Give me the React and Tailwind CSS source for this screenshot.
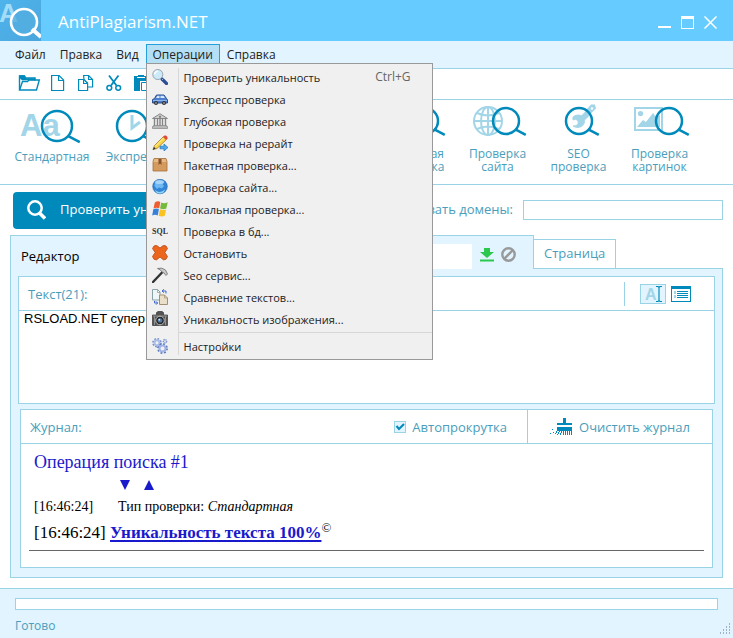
import { useState } from 'react'

/* ---------- small line icons ---------- */

function Logo() {
  return (
    <svg width="41" height="41" viewBox="0 0 41 41" aria-hidden="true">
      <defs>
        <linearGradient id="logoBg" x1="0" y1="0" x2="1" y2="1">
          <stop offset="0" stopColor="#4fb4ec" />
          <stop offset="1" stopColor="#4aa6dd" />
        </linearGradient>
      </defs>
      <rect width="41" height="41" fill="url(#logoBg)" />
      <text x="-1" y="22" fontSize="26" fontWeight="700" fontFamily="Liberation Sans, sans-serif" fill="#a3dcf8">A</text>
      <circle cx="24" cy="22" r="13" fill="#54aee0" fillOpacity="0.75" stroke="#fff" strokeWidth="2.6" />
      <path d="M32 29l9 8" stroke="#fff" strokeWidth="4" />
    </svg>
  )
}

function Folder() {
  return (
    <svg width="20" height="18" viewBox="0 0 20 18" className="overflow-visible" fill="none" stroke="#008abb">
      <path d="M.5 16V2h5l1 2h9.500v2.500" strokeWidth="1.400" />
      <path d="M.5 4V1.500h5l1.500 3H16V6H3z" fill="#008abb" strokeWidth=".5" />
      <path d="M.6 16L3.500 7.500h5l1.500-1.500h10.300l-2.800 10z" strokeWidth="1.400" />
    </svg>
  )
}

function Page() {
  return (
    <svg width="15" height="18" viewBox="0 0 15 18" fill="none" stroke="#008abb" strokeWidth="1.200">
      <path d="M.6 1.500h7.500l4.500 4.500v10.500H.6z" />
      <path d="M7.600 1.500v5h5" />
    </svg>
  )
}

function Copy() {
  return (
    <svg width="16" height="18" viewBox="0 0 16 18" fill="#fff" stroke="#008abb" strokeWidth="1.200">
      <path d="M.6 5.500h5.500l3.500 3.500v7.500H.6z" />
      <path d="M5.600 1.500h5l4 4v7.500h-5V9L6 5.500z" />
      <path d="M10.600 1.500v4h4M5.600 5.500V9.500h4" fill="none" />
    </svg>
  )
}

function Cut() {
  return (
    <svg width="16" height="18" viewBox="0 0 16 18" fill="none" stroke="#008abb">
      <path d="M3 1.500l7.500 10M12.500 1.500L5 11.500" strokeWidth="1.800" />
      <circle cx="3.300" cy="13.800" r="2.400" strokeWidth="1.500" />
      <circle cx="12.200" cy="13.800" r="2.400" strokeWidth="1.500" />
    </svg>
  )
}

function Paste() {
  return (
    <svg width="16" height="18" viewBox="0 0 16 18">
      <path d="M0 2h4V1h6v1h4v5H6v10H0z" fill="#008abb" />
      <path d="M3 3.500h8" stroke="#fff" />
      <path d="M7.500 8.500h7v8h-7z" fill="#fff" stroke="#008abb" />
    </svg>
  )
}

function Lens({ x = 31, y = 23, r = 15 }) {
  const edge = r * 0.72
  return (
    <g fill="none" stroke="#008abb">
      <circle cx={x} cy={y} r={r} strokeWidth="2.500" />
      <path d={`M${x + edge} ${y + edge - 1}l${r * 0.8} ${r * 0.42}`} strokeWidth="2.600" />
    </g>
  )
}

function StandardArt() {
  return (
    <svg width="66" height="46" viewBox="0 0 66 46">
      <text x="1" y="35" fontSize="31" fontWeight="700" fontFamily="Liberation Sans, sans-serif" fill="#a1d5e7">Aa</text>
      <Lens x={38} y={25} />
    </svg>
  )
}

function ExpressArt() {
  return (
    <svg width="66" height="46" viewBox="0 0 66 46">
      <path d="M33 14v13l8-6" fill="none" stroke="#a1d5e7" strokeWidth="3" />
      <Lens x={33} y={25} />
    </svg>
  )
}

function BatchArt() {
  return (
    <svg width="66" height="46" viewBox="0 0 66 46">
      <path d="M8 10h26v24H8z" fill="none" stroke="#a1d5e7" strokeWidth="2" />
      <Lens x={41} y={20} r={13} />
    </svg>
  )
}

function SiteArt() {
  return (
    <svg width="66" height="46" viewBox="0 0 66 46">
      <g fill="none" stroke="#a1d5e7" strokeWidth="2">
        <circle cx="23" cy="20" r="14" />
        <ellipse cx="23" cy="20" rx="7" ry="14" />
        <path d="M23 6v28M9 20h28M12 12q11 5 22 0M12 28q11-5 22 0" />
      </g>
      <Lens x={41} y={20} r={13} />
    </svg>
  )
}

function SeoArt() {
  return (
    <svg width="66" height="46" viewBox="0 0 66 46">
      <path d="M37 17l5-5" stroke="#a1d5e7" strokeWidth="6" />
      <path d="M40 9l5-5.500 4 0 1 4-6 6z" fill="#a1d5e7" />
      <circle cx="46" cy="7.500" r="1.200" fill="#fff" />
      <path d="M27 16c4-3 8-2 10 0 3 4 1 9-3 10-3 1-5 0-7-1 4 0 6-2 5-5-1-2-4-2-5-1 0-1 0-2 0-3z" fill="#a1d5e7" stroke="#a1d5e7" />
      <Lens x={33} y={20} r={13} />
    </svg>
  )
}

function ImageArt() {
  return (
    <svg width="66" height="46" viewBox="0 0 66 46">
      <path d="M8 7h27v22H8z" fill="none" stroke="#a1d5e7" strokeWidth="2" />
      <circle cx="13.500" cy="12.500" r="2.600" fill="#a1d5e7" />
      <path d="M10 26l6-7 3 2 7-9 3 4 4-2v12z" fill="#a1d5e7" />
      <Lens x={42} y={20} r={13} />
    </svg>
  )
}

function Broom() {
  return (
    <svg width="22" height="18" viewBox="0 0 22 18" fill="#008abb" shapeRendering="crispEdges">
      <path d="M13 0h3v5h6v2H7V5h6zM7 9h15v4H7z" />
      <path d="M21 13h1v4h-1zM19 13h1v4h-1zM17 13h1v4h-1zM15 13h1v4h-1zM13 13h1v4h-1zM11 13h1v2h-1zM10 15h1v2h-1zM9 12h1v2H9zM8 14h1v2H8zM7 16h1v1H7zM6 13h1v2H6zM5 15h1v1H5zM3 14h1v1H3zM2 11h1v1H2zM0 15h1v1H0z" />
    </svg>
  )
}

/* ---------- coloured menu icons, 16x16 ---------- */

const menuArt = {
  search: (
    <>
      <path d="M10 10l4.500 4.500" stroke="#2c4f93" strokeWidth="3.200" strokeLinecap="round" />
      <path d="M10 11l1.500-1.500" stroke="#9db8e2" />
      <circle cx="5.800" cy="5.500" r="5" fill="#cdeaf9" stroke="#96a3ad" />
      <path d="M2.500 5.500a3.300 3.300 0 013.300-3.300" stroke="#fff" strokeWidth="1.500" fill="none" />
    </>
  ),
  car: (
    <>
      <path d="M.5 8.500l2-1 2-3.500h7.500l2.500 3.500 1 1.500v3H.5z" fill="#4d7fce" stroke="#284f91" />
      <path d="M4 7l1.300-2.200h2.200V7zM8.500 4.800h3L13 7H8.500z" fill="#d6e7fb" />
      <path d="M1 9.500h14" stroke="#8db4ec" />
      <circle cx="4" cy="12" r="2" fill="#333" /><circle cx="4" cy="12" r=".8" fill="#ccc" />
      <circle cx="12" cy="12" r="2" fill="#333" /><circle cx="12" cy="12" r=".8" fill="#ccc" />
    </>
  ),
  bank: (
    <>
      <path d="M.5 5.500L8 .8l7.500 4.700z" fill="#d2d2d2" stroke="#858585" />
      <circle cx="8" cy="3.800" r="1.100" fill="#777" />
      <path d="M2.500 6v7M5.500 6v7M8 6v7M10.500 6v7M13.500 6v7" stroke="#858585" strokeWidth="1.400" />
      <path d="M1.500 12.500h13v1h1v2H.5v-2h1z" fill="#b9b9b9" stroke="#858585" strokeWidth=".7" />
    </>
  ),
  pencil: (
    <>
      <path d="M1 14.500l1.500-4L11.500 1.500l3 3-9.500 9z" fill="#f7d648" stroke="#a57c28" strokeWidth=".8" />
      <path d="M11 2l1.500-1.500h1.500l1.500 1.500v1.500L14 5z" fill="#e04a3a" />
      <path d="M3 11.500l8.500-8.500" stroke="#fff1a0" />
      <path d="M.7 15l1.300-3 1.800 1.600z" fill="#333" />
      <path d="M8 11.200h4V9l4 3.500-4 3.500v-2.200H8z" fill="#4caae8" stroke="#2673b8" strokeWidth=".7" />
    </>
  ),
  box: (
    <>
      <path d="M1 4.500l1-3h12l1 3v9.500H1z" fill="#d59a5e" stroke="#a66e3c" strokeWidth=".8" />
      <path d="M1.500 5h13L13.600 2H2.400z" fill="#e6b982" />
      <path d="M6.500 2h3v6L8 6.500 6.500 8z" fill="#83522c" />
    </>
  ),
  globe: (
    <>
      <circle cx="8" cy="7.500" r="7.300" fill="#3284d6" stroke="#2669ad" strokeWidth=".6" />
      <path d="M3 3.500q4-4 9.500-.5l-2 2 1.500 2-2 2.500-3-1-2 1.500-2.500-3z" fill="#6fb9f2" />
      <path d="M3 11q5 4 10-.5-1 4-5 4t-5-3.500z" fill="#8ed8fc" />
      <ellipse cx="7.500" cy="3" rx="4.500" ry="2" fill="#cbe8fd" fillOpacity=".6" />
    </>
  ),
  flag: (
    <>
      <path d="M2.800 1.500q3-2 5.500-.5L7.200 7.200Q4.500 6 1.500 7.500z" fill="#ee5d32" />
      <path d="M9.200 1.500q3 1.500 6.500-.3l-1.400 6.200q-3 1.600-6.200 0z" fill="#76b93a" />
      <path d="M1.300 8.300q3-1.500 5.600-.3L5.700 14.500q-2.700-1.500-5.500 0z" fill="#3580d8" />
      <path d="M7.900 8.300q3 1.500 6.200.1l-1.300 6.400q-3 1.500-6.100-.1z" fill="#f9c324" />
    </>
  ),
  sql: (
    <text x="0" y="11" fontSize="8" fontWeight="700" fontFamily="Liberation Serif, serif" fill="#333">SQL</text>
  ),
  stop: (
    <path d="M2 1l2.500-.7L8 3l3.500-2.700L14 1l1.500 2.500-2.700 4 2.700 4-1.500 2.700-2.500.7L8 12l-3.500 2.900L2 14.200.5 11.500l2.700-4-2.700-4z" fill="#ec651d" stroke="#b94712" strokeWidth=".8" />
  ),
  hammer: (
    <>
      <path d="M1 15L10.500 5" stroke="#333" strokeWidth="2.400" strokeLinecap="round" />
      <path d="M5.500 1.500q4.500-1.500 8 1.500l2 4-1.500 1.500L12 6l-2-1-1.500-2z" fill="#c9c9c9" stroke="#6d6d6d" strokeWidth=".8" />
    </>
  ),
  compare: (
    <>
      <path d="M.5.500h5l2.500 2.500v8h-7.500z" fill="#eef6f7" stroke="#8aa1a6" />
      <path d="M7.500 6h5l3 3v6.500h-8z" fill="#eadfc8" stroke="#a29170" />
      <path d="M12.500 6v3h3M5.500.5v3H8" fill="none" stroke="#a29170" strokeWidth=".7" />
      <path d="M10 2h4v2.500M12 .3L10 2l2 1.700M5.500 14h-3V12M4 12.300L5.700 14 4 15.700" fill="none" stroke="#4169cf" />
    </>
  ),
  camera: (
    <>
      <path d="M.5 4h4V1.500L6 .5h4l1.500 1V4h4v10.500H.5z" fill="#535353" stroke="#333" strokeWidth=".7" />
      <path d="M1 5h14M2.500 5v9M13.500 5v9" stroke="#909090" />
      <circle cx="8" cy="9.500" r="4.300" fill="#292929" stroke="#bababa" />
      <circle cx="8" cy="9.500" r="2.300" fill="#4f769f" />
      <circle cx="7.300" cy="8.700" r=".9" fill="#d6e8fb" />
    </>
  ),
  gears: (
    <g fill="none">
      <circle cx="5" cy="4.800" r="4" stroke="#6d87c8" strokeWidth="1.600" strokeDasharray="1.700 1.440" />
      <circle cx="5" cy="4.800" r="2.500" stroke="#aabde9" strokeWidth="2" />
      <circle cx="10.500" cy="10.500" r="4.500" stroke="#5875bf" strokeWidth="1.800" strokeDasharray="1.800 1.740" />
      <circle cx="10.500" cy="10.500" r="3" stroke="#9fb4e5" strokeWidth="2" />
      <circle cx="13" cy="3.200" r="1.600" stroke="#7c94d0" strokeWidth="1.500" strokeDasharray="1.200 .6" />
    </g>
  ),
}

const menuItems = [
  { icon: 'search', label: 'Проверить уникальность', keys: 'Ctrl+G' },
  { icon: 'car', label: 'Экспресс проверка' },
  { icon: 'bank', label: 'Глубокая проверка' },
  { icon: 'pencil', label: 'Проверка на рерайт' },
  { icon: 'box', label: 'Пакетная проверка...' },
  { icon: 'globe', label: 'Проверка сайта...' },
  { icon: 'flag', label: 'Локальная проверка...' },
  { icon: 'sql', label: 'Проверка в бд...' },
  { icon: 'stop', label: 'Остановить' },
  { icon: 'hammer', label: 'Seo сервис...' },
  { icon: 'compare', label: 'Сравнение текстов...' },
  { icon: 'camera', label: 'Уникальность изображения...' },
]

function MenuItem({ icon, label, keys }) {
  return (
    <button role="menuitem" className="flex h-[22px] w-full items-center pr-[21px] pl-[5px] text-left hover:bg-[#d8eefb]">
      <svg width="16" height="16" viewBox="0 0 16 16" aria-hidden="true" className="mr-4 shrink-0">{menuArt[icon]}</svg>
      <span className="flex-1">{label}</span>
      {keys && <span className="text-xs text-[#666]">{keys}</span>}
    </button>
  )
}

function OperationsMenu() {
  return (
    <div role="menu" className="absolute top-full left-0 z-10 -mt-0.5 w-[287px] border border-[#999] bg-[#f0f0f0] py-0.5 text-[11px] text-[#222]">
      <div className="absolute inset-y-1 left-[31px] w-px bg-[#d7d7d7]" />
      {menuItems.map((item) => <MenuItem key={item.icon} {...item} />)}
      <div className="my-0.5 ml-8 h-px bg-[#d7d7d7]" />
      <MenuItem icon="gears" label="Настройки" />
    </div>
  )
}

function Mode({ art, children, className = 'w-[81px]' }) {
  return (
    <button className={`flex shrink-0 flex-col items-center text-center text-xs leading-[13px] text-[#4a9ebb] ${className}`}>
      {art}
      {children}
    </button>
  )
}

const tools = [
  ['Открыть', Folder],
  ['Создать', Page],
  ['Копировать', Copy],
  ['Вырезать', Cut],
  ['Вставить', Paste],
]

export default function App() {
  const [text, setText] = useState('RSLOAD.NET супер софт')
  const [autoScroll, setAutoScroll] = useState(true)

  return (
    <div className="flex min-h-screen flex-col overflow-hidden bg-white font-['Open_Sans','Noto_Sans',sans-serif] text-[13px] text-[#4a9ebb]">
      {/* Title bar */}
      <header className="flex h-[41px] items-center bg-[#66ccff] text-white">
        <Logo />
        <h1 className="ml-[17px] flex-1 pt-0.5 text-[17px]">AntiPlagiarism.NET</h1>
        <div className="flex gap-2.5 pt-1 pr-4">
          <button aria-label="Свернуть">
            <svg width="13" height="13" shapeRendering="crispEdges"><path d="M0 11h13" stroke="#fff" strokeWidth="2" /></svg>
          </button>
          <button aria-label="Развернуть">
            <svg width="13" height="13" shapeRendering="crispEdges"><path d="M.5 1v11.500h12V1" fill="none" stroke="#fff" /><path d="M0 1.500h13" stroke="#fff" strokeWidth="3" /></svg>
          </button>
          <button aria-label="Закрыть">
            <svg width="13" height="13"><path d="M.5.5l12 12M12.500.5l-12 12" stroke="#fff" strokeWidth="1.500" /></svg>
          </button>
        </div>
      </header>

      {/* Menu bar */}
      <nav className="flex h-7 items-start border-b border-[#9bd3e6] bg-[#e1f4ff] pt-[3px] pl-2 text-xs leading-[19px] text-[#222]">
        <button className="border border-transparent px-1.5">Файл</button>
        <button className="border border-transparent px-1.5">Правка</button>
        <button className="border border-transparent px-1.5">Вид</button>
        <div className="relative">
          <button aria-expanded="true" className="border border-[#26a0da] bg-[#b5dff5] px-1.5">Операции</button>
          <OperationsMenu />
        </div>
        <button className="border border-transparent px-1.5">Справка</button>
      </nav>

      {/* Toolbar */}
      <div className="flex h-[31px] items-center gap-3 border-b border-[#9bd3e6] pb-0.5 pl-[19px]">
        {tools.map(([label, Icon]) => <button key={label} aria-label={label}><Icon /></button>)}
      </div>

      {/* Check modes */}
      <div className="flex h-[85px] items-start border-b border-[#9bd3e6] pt-px pl-3">
        <Mode className="w-20 gap-[3px]" art={<StandardArt />}>Стандартная</Mode>
        <Mode className="w-20 gap-[3px]" art={<ExpressArt />}>Экспресс</Mode>
        <Mode className="w-[102px] gap-[3px]" art={<ExpressArt />}>Глубокая</Mode>
        <Mode className="w-[102px] gap-[3px]" art={<ExpressArt />}>Рерайт</Mode>
        <Mode art={<BatchArt />}>Пакетная<br />проверка</Mode>
        <Mode art={<SiteArt />}>Проверка<br />сайта</Mode>
        <Mode art={<SeoArt />}>SEO<br />проверка</Mode>
        <Mode art={<ImageArt />}>Проверка<br />картинок</Mode>
      </div>

      {/* Start + ignored domains */}
      <div className="flex h-[50px] items-center pr-2.5 pl-[13px]">
        <button className="flex h-[37px] w-[238px] items-center gap-3.5 rounded bg-[#008abb] pl-3.5 whitespace-nowrap text-white">
          <svg width="19" height="20" viewBox="0 0 19 20" fill="none" stroke="#fff" className="shrink-0">
            <circle cx="8" cy="8" r="6.700" strokeWidth="2.500" />
            <path d="M12.500 13l5.500 5.500" strokeWidth="3.500" />
          </svg>
          Проверить уникальность
        </button>
        <label htmlFor="domains" className="mr-2.5 ml-auto">Игнорировать домены:</label>
        <input id="domains" className="h-5 w-[200px] border border-[#9bd3e6] bg-white px-1 outline-none" />
      </div>

      {/* Tabs */}
      <div className="mx-2.5 flex items-end">
        <div className="relative z-[1] -mb-px flex h-[34px] w-[524px] shrink-0 items-center border border-b-0 border-[#9bd3e6] bg-[#e1f4ff] pt-2 pl-2.5 text-black">
          <button className="flex-1 text-left">Редактор</button>
          <input aria-label="Адрес страницы" className="h-[25px] w-[230px] bg-white px-1 outline-none" />
          <button aria-label="Загрузить" className="ml-2">
            <svg width="15" height="14" viewBox="0 0 15 14" fill="#2bc84d" className="mb-1"><path d="M4 0h6v4h4L7 10 0 4h4zM0 11.500h14v2H0z" /></svg>
          </button>
          <button aria-label="Отменить" className="mr-[17px] ml-1.5">
            <svg width="15" height="15" viewBox="0 0 15 15" fill="none" stroke="#999" strokeWidth="2.400" className="mb-1"><circle cx="7.500" cy="7.500" r="6.200" /><path d="M3.200 11.800l8.600-8.600" /></svg>
          </button>
        </div>
        <button className="h-[29px] border border-b-0 border-l-0 border-[#9bd3e6] px-2.5">Страница</button>
      </div>

      <main className="mx-2.5 mb-2.5 flex flex-1 flex-col gap-[5px] border border-[#9bd3e6] bg-[#e1f4ff] px-[7px] pt-[7px] pb-[9px]">
        {/* Source text */}
        <section className="border border-[#9bd3e6] bg-white">
          <div className="flex h-[34px] items-center border-b border-[#9bd3e6] pr-[23px]">
            <label htmlFor="source" className="flex-1 pt-0.5 pl-[9px]">Текст(21):</label>
            <div className="mr-[15px] h-6 w-px bg-[#9bd3e6]" />
            <button aria-label="Режим текста" className="mr-[5px] border border-[#9bd3e6] bg-[#e1f4ff]">
              <svg width="24" height="18" viewBox="0 0 24 18">
                <text x="4" y="15" fontSize="16" fontWeight="700" fontFamily="Liberation Sans, sans-serif" fill="#a1d5e7">A</text>
                <path d="M15 1.500h2l1 1 1-1h2M18 2v14M15 16.500h2l1-1 1 1h2" fill="none" stroke="#008abb" strokeWidth="1.200" />
              </svg>
            </button>
            <button aria-label="Список">
              <svg width="20" height="16" shapeRendering="crispEdges">
                <path d="M.5.5h19v15H.5z" fill="#fff" stroke="#008abb" />
                <path d="M0 0h20v3H0z" fill="#008abb" />
                <path d="M6 5.500h11M6 7.500h11M6 9.500h11M6 11.500h11" stroke="#008abb" />
                <path d="M3 5h2v3H3zM3 9h2v3H3z" fill="#a1d5e7" />
              </svg>
            </button>
          </div>
          <textarea
            id="source"
            value={text}
            onChange={(e) => setText(e.target.value)}
            className="block h-[92px] w-full resize-none bg-white px-[5px] font-['Liberation_Sans',sans-serif] text-[13px] leading-4 text-black outline-none"
          />
        </section>

        {/* Journal */}
        <section className="mx-0.5 flex flex-1 flex-col border border-[#9bd3e6] bg-white">
          <div className="flex h-[34px] items-stretch border-b border-[#9bd3e6]">
            <h2 className="flex-1 self-center pt-0.5 pl-[9px]">Журнал:</h2>
            <label className="mr-5 flex items-center gap-1.5">
              <span className="relative size-3">
                <input
                  type="checkbox"
                  checked={autoScroll}
                  onChange={(e) => setAutoScroll(e.target.checked)}
                  className="block size-3 appearance-none border border-[#9bd3e6] bg-[#e1f4ff]"
                />
                {autoScroll && (
                  <svg width="12" height="12" className="pointer-events-none absolute inset-0"><path d="M2.500 5l2.500 3 5-5" fill="none" stroke="#008abb" strokeWidth="2" /></svg>
                )}
              </span>
              <span className="pt-0.5">Автопрокрутка</span>
            </label>
            <button className="flex items-center gap-[7px] border-l border-[#9bd3e6] px-[22px]">
              <Broom />
              <span className="pt-0.5">Очистить журнал</span>
            </button>
          </div>
          <div className="flex-1 px-2 pt-[7px] font-['Liberation_Serif',serif] text-[17px] text-black">
            <h3 className="pl-[5px] text-lg leading-[22px] text-[#1a1acd]">Операция поиска #1</h3>
            <div className="flex gap-3.5 py-[7px] pl-[91px]">
              <a href="#down" aria-label="Вниз"><svg width="10" height="10"><path d="M0 0h10L5 10z" fill="#1a1acd" /></svg></a>
              <a href="#up" aria-label="Вверх"><svg width="10" height="10"><path d="M0 10h10L5 0z" fill="#1a1acd" /></svg></a>
            </div>
            <p className="flex gap-[25px] pl-[5px] text-sm leading-5">
              <span>[16:46:24]</span>
              <span>Тип проверки: <i>Стандартная</i></span>
            </p>
            <p className="pt-0.5 pl-[5px] leading-7">
              [16:46:24] <a href="#result" className="font-bold text-[#1a1acd] underline decoration-2 underline-offset-2">Уникальность текста 100%</a><sup className="text-[13px]">©</sup>
            </p>
            <hr className="mt-[3px] border-[#666]" />
          </div>
        </section>
      </main>

      {/* Status bar */}
      <footer className="flex h-[50px] flex-col border-t border-[#9bd3e6] bg-[#e1f4ff] px-[15px] pt-[9px]">
        <div role="progressbar" aria-label="Ход проверки" className="h-3 shrink-0 border border-[#9bd3e6] bg-white" />
        <div className="flex items-end justify-between">
          <span className="pt-[7px] text-xs leading-[18px]">Готово</span>
          <svg width="12" height="12" fill="#9eb3c7" className="-mr-3.5">
            <path d="M9 0h1v2H9zM9 3h1v2H9zM6 3h1v2H6zM9 6h1v2H9zM6 6h1v2H6zM3 6h1v2H3zM9 9h1v2H9zM6 9h1v2H6zM3 9h1v2H3zM0 9h1v2H0z" />
          </svg>
        </div>
      </footer>
    </div>
  )
}
